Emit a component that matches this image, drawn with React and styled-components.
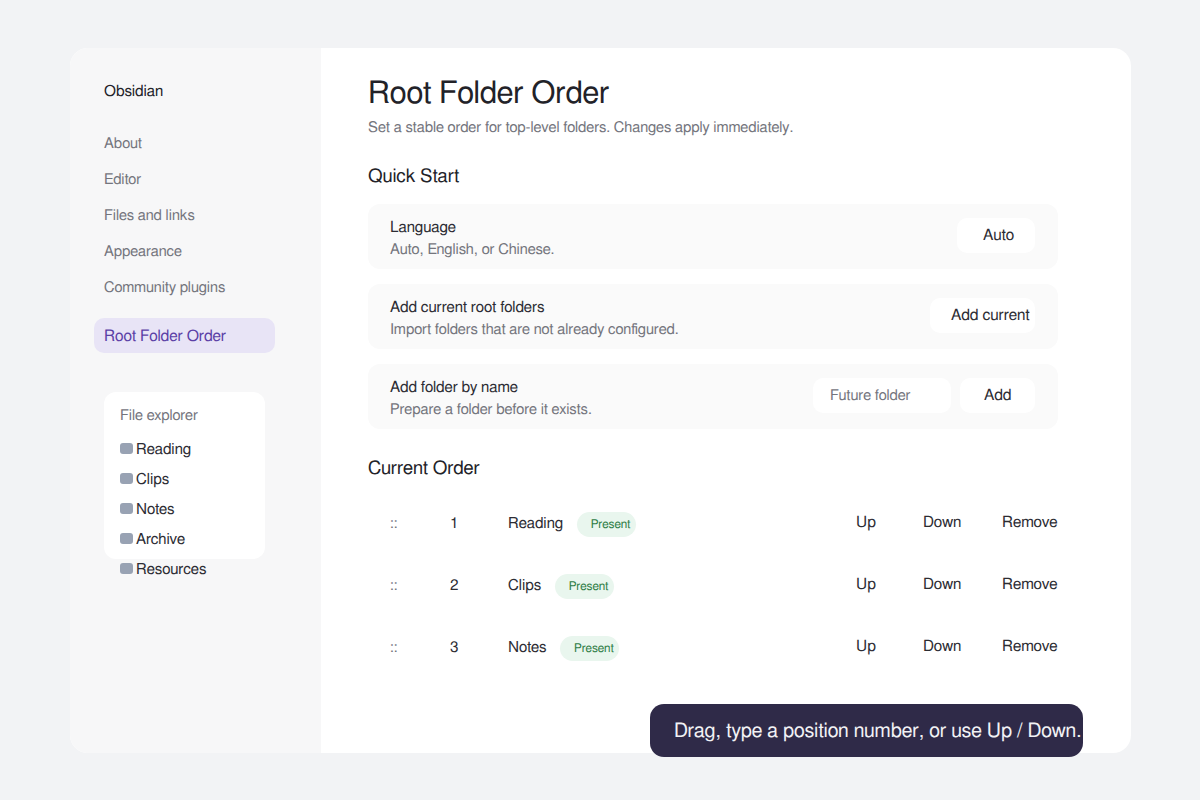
import React from "react";
import styled, { createGlobalStyle } from "styled-components";

const Global = createGlobalStyle`
  html, body { margin: 0; padding: 0; height: 100%; background: #f2f3f5; }
  body { font-family: FreeSans, "Liberation Sans", Arial, sans-serif; color: #222228; text-rendering: geometricPrecision; -webkit-font-smoothing: antialiased; }
  * { box-sizing: border-box; }
`;
const Page = styled.div`
  width: 1200px; height: 800px; padding: 48px 69px 47px 70px; overflow: hidden;
`;
const Shell = styled.div`
  position: relative; display: flex; width: 1061px; height: 705px;
  background: #fff; border-radius: 18px; overflow: visible;
`;
const Sidebar = styled.aside`
  width: 251px; flex: none; background: #f7f7f8; border-radius: 18px 0 0 18px;
  padding: 36px 0 0 24px;
`;
const Brand = styled.div`
  font-size: 15.3px; line-height: 18px; padding-left: 10px; color: #222228; margin-bottom: 24px;
`;
const NavItem = styled.div`
  width: 181px; height: ${p => (p.$active ? 35 : 36)}px; padding: ${p => (p.$active ? 2 : 0)}px 0 0 10px;
  display: flex; align-items: center; font-size: ${p => (p.$active ? 15.7 : 14.8)}px; border-radius: 10px;
  color: ${p => (p.$active ? "#5b3fa6" : "#74757d")};
  background: ${p => (p.$active ? "#e8e4f6" : "transparent")};
  margin-top: ${p => (p.$active ? 12 : 0)}px;
`;
const Explorer = styled.div`
  width: 161px; height: 167px; margin: 39px 0 0 10px; padding: 15px 16px 0;
  background: #fff; border-radius: 12px;
`;
const ExplorerTitle = styled.div`
  font-size: 14.8px; line-height: 18px; color: #74757d; margin-bottom: 8px;
`;
const Folder = styled.div`
  display: flex; align-items: center; gap: 3px; height: 30px; font-size: 15.2px; color: #2c2c33; white-space: nowrap;
`;
const FolderIcon = styled.span`
  width: 13px; height: 11px; border-radius: 3px; background: #98a2b3; flex: none; margin-top: 1px;
`;
const FolderName = styled.span`
  padding-top: 4px;
`;
const Main = styled.main`
  flex: 1; padding: 27px 73px 0 47px; min-width: 0;
`;
const Title = styled.h1`
  margin: 0; font-size: 31px; line-height: 40px; font-weight: 400; color: #222228;
`;
const Subtitle = styled.p`
  margin: 3px 0 0; font-size: 14.85px; line-height: 20px; color: #74757d;
`;
const SectionTitle = styled.h2`
  margin: ${p => p.$top}px 0 0; font-size: 18.7px; line-height: 24px; font-weight: 400; color: #222228;
`;
const Card = styled.div`
  height: 65px; margin-top: 15px; padding: 0 23px 0 22px; display: flex; align-items: center; justify-content: space-between;
  background: #fafafa; border-radius: 12px;
  &:first-of-type { margin-top: 0; }
`;
const Cards = styled.div`
  margin-top: 15px;
`;
const CardText = styled.div`
  display: flex; flex-direction: column; gap: 1px; padding-top: 5px;
`;
const CardLabel = styled.div`
  font-size: 15.3px; line-height: 20px; color: #2c2c33;
`;
const CardHint = styled.div`
  font-size: 14.85px; line-height: 20px; color: #74757d;
`;
const Controls = styled.div`
  display: flex; align-items: center; gap: 9px; margin-top: -2px;
`;
const Button = styled.div`
  width: ${p => p.$w}px; height: 35px; padding: 2px 0 0 ${p => p.$pad}px; background: #fff; border-radius: 10px;
  display: flex; align-items: center; font-size: 15.6px; color: #2c2c33; white-space: nowrap;
`;
const SoloButton = styled(Button)`
  margin-top: -2px;
`;
const Input = styled.div`
  width: 138px; height: 35px; padding-left: 17px; background: #fff; border-radius: 10px;
  display: flex; align-items: center; font-size: 14.8px; color: #74757d;
`;
const List = styled.div`
  margin-top: 12px;
`;
const Row = styled.div`
  display: grid; grid-template-columns: 60px 80px 1fr 67px 79px 56px; height: 62px; align-items: center; white-space: nowrap;
`;
const Grip = styled.span`
  font-size: 14.8px; color: #74757d; padding-left: 22px; margin-top: -1px;
`;
const Position = styled.span`
  font-size: 15.3px; color: #2c2c33; padding-left: 22px; margin-top: 1px;
`;
const Name = styled.div`
  display: flex; align-items: center; gap: 13.5px; font-size: 15.2px; color: #2c2c33; margin-top: 1px;
`;
const Badge = styled.span`
  width: 59px; height: 25px; padding-left: 14px; border-radius: 999px; background: #e9f6ee; color: #2e7d46;
  font-size: 12px; display: flex; align-items: center; padding-top: 1px;
`;
const Action = styled.span`
  font-size: 15.5px; color: #2c2c33; margin-top: -1px;
`;
const Toast = styled.div`
  position: absolute; left: 580px; top: 656px; width: 433px; height: 53px; padding-left: 24px;
  background: #2f2a48; color: #f2f2f5; border-radius: 14px; display: flex; align-items: center;
  font-size: 19.8px; white-space: nowrap;
`;

const nav = ["About", "Editor", "Files and links", "Appearance", "Community plugins"];
const folders = ["Reading", "Clips", "Notes", "Archive", "Resources"];
const rows = ["Reading", "Clips", "Notes"];

export default function App() {
  return (
    <Page>
      <Global />
      <Shell>
        <Sidebar>
          <Brand>Obsidian</Brand>
          {nav.map(n => <NavItem key={n}>{n}</NavItem>)}
          <NavItem $active>Root Folder Order</NavItem>
          <Explorer>
            <ExplorerTitle>File explorer</ExplorerTitle>
            {folders.map(f => (
              <Folder key={f}><FolderIcon /><FolderName>{f}</FolderName></Folder>
            ))}
          </Explorer>
        </Sidebar>
        <Main>
          <Title>Root Folder Order</Title>
          <Subtitle>Set a stable order for top-level folders. Changes apply immediately.</Subtitle>
          <SectionTitle $top={27}>Quick Start</SectionTitle>
          <Cards>
            <Card>
              <CardText>
                <CardLabel>Language</CardLabel>
                <CardHint>Auto, English, or Chinese.</CardHint>
              </CardText>
              <SoloButton $w={78} $pad={26}>Auto</SoloButton>
            </Card>
            <Card>
              <CardText>
                <CardLabel>Add current root folders</CardLabel>
                <CardHint>Import folders that are not already configured.</CardHint>
              </CardText>
              <SoloButton $w={105} $pad={21}>Add current</SoloButton>
            </Card>
            <Card>
              <CardText>
                <CardLabel>Add folder by name</CardLabel>
                <CardHint>Prepare a folder before it exists.</CardHint>
              </CardText>
              <Controls>
                <Input>Future folder</Input>
                <Button $w={75} $pad={24}>Add</Button>
              </Controls>
            </Card>
          </Cards>
          <SectionTitle $top={28}>Current Order</SectionTitle>
          <List>
            {rows.map((r, i) => (
              <Row key={r}>
                <Grip>::</Grip>
                <Position>{i + 1}</Position>
                <Name>{r}<Badge>Present</Badge></Name>
                <Action>Up</Action>
                <Action>Down</Action>
                <Action>Remove</Action>
              </Row>
            ))}
          </List>
        </Main>
        <Toast>Drag, type a position number, or use Up / Down.</Toast>
      </Shell>
    </Page>
  );
}
